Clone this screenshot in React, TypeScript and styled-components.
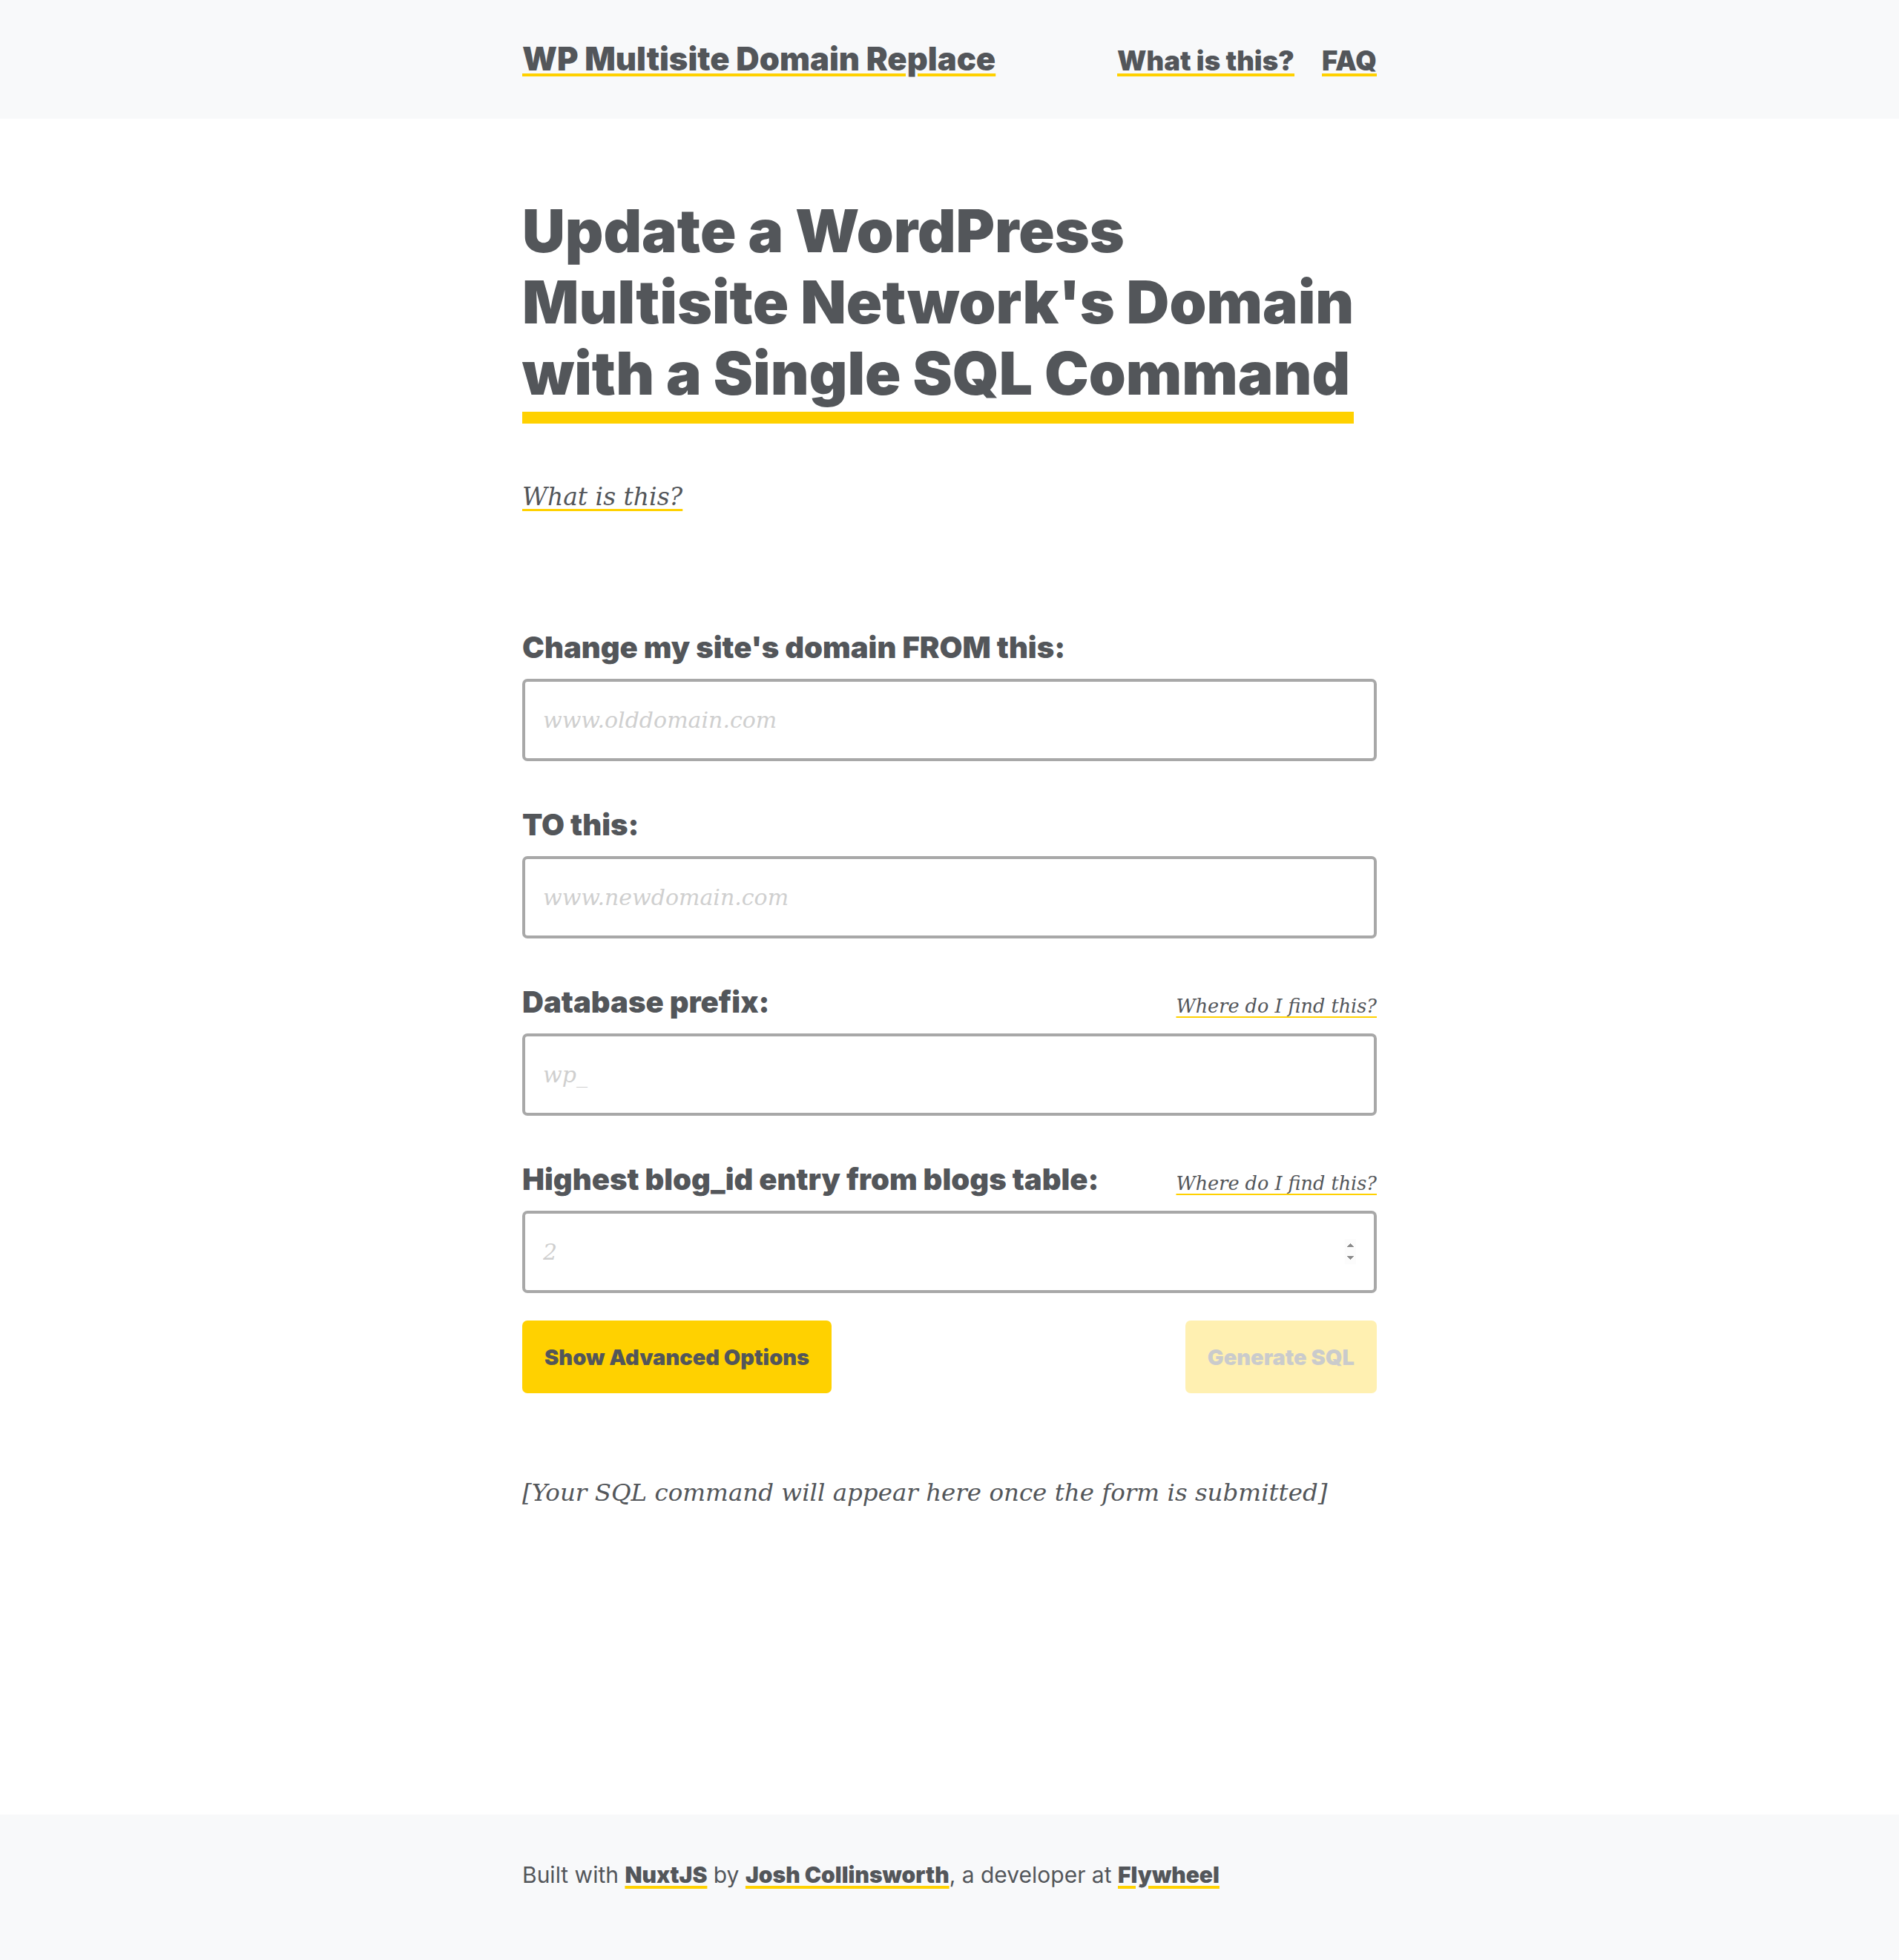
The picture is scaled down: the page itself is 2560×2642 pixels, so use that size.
import React from "react";
import styled, { createGlobalStyle } from "styled-components";

const ink = "#53565a";
const yellow = "#ffd100";
const shade = "#f8f9fa";
const sans = `Inter, Roboto, "Noto Sans", sans-serif`;
const serif = `"DejaVu Serif", "Liberation Serif", serif`;

const GlobalStyle = createGlobalStyle`
  html, body { margin: 0; padding: 0; }
  body {
    background: #ffffff;
    color: ${ink};
    font-family: ${sans};
  }
  * { box-sizing: border-box; }
`;

const Page = styled.div`
  min-height: 100vh;
  display: flex;
  flex-direction: column;
`;

const Container = styled.div`
  width: 1152px;
  margin: 0 auto;
`;

const Header = styled.header`
  background: ${shade};
  height: 160px;
  padding-top: 53px;
`;

const HeaderInner = styled(Container)`
  display: flex;
  justify-content: space-between;
  align-items: baseline;
`;

const underline = (thickness: number, offset: number) => `
  color: ${ink};
  text-decoration: underline;
  text-decoration-color: ${yellow};
  text-decoration-thickness: ${thickness}px;
  text-underline-offset: ${offset}px;
`;

const SiteTitle = styled.a`
  font-size: 43.5px;
  font-weight: 900;
  line-height: 1.2;
  ${underline(4, 4)}
`;

const Nav = styled.nav`
  display: flex;
  gap: 37px;
  align-items: baseline;
`;

const NavLink = styled.a`
  font-size: 36.5px;
  font-weight: 900;
  line-height: 1.2;
  ${underline(4, 4)}
`;

const Main = styled.main`
  flex: 1;
  padding-top: 103px;
`;

const Title = styled.h1`
  margin: 0;
  font-size: 80px;
  font-weight: 900;
  line-height: 96px;
`;

const TitleText = styled.span`
  display: inline-block;
  padding-bottom: 4px;
  border-bottom: 16px solid ${yellow};
`;

const Intro = styled.p`
  margin: 79px 0 0;
  font-family: ${serif};
  font-style: italic;
  font-size: 33px;
`;

const SerifLink = styled.a`
  ${underline(3, 5)}
`;

const Form = styled.form`
  margin-top: 160px;
  display: flex;
  flex-direction: column;
`;

const Field = styled.div`
  display: flex;
  flex-direction: column;
  gap: 18px;
  & + & {
    margin-top: 62px;
  }
`;

const LabelRow = styled.div`
  display: flex;
  justify-content: space-between;
  align-items: baseline;
`;

const Label = styled.label`
  font-size: 40px;
  font-weight: 900;
  line-height: 1.2;
`;

const Help = styled.a`
  font-family: ${serif};
  font-style: italic;
  font-size: 25.5px;
  ${underline(2, 5)}
`;

const Input = styled.input`
  display: block;
  width: 100%;
  height: 111px;
  padding: 0 24px;
  border: 4px solid #a8a8a8;
  border-radius: 7px;
  background: #fff;
  color: ${ink};
  font-family: ${serif};
  font-style: italic;
  font-size: 30px;
  outline: none;
  &::placeholder {
    color: #cfcfcf;
  }
  &::-webkit-inner-spin-button {
    opacity: 1;
  }
`;

const ButtonRow = styled.div`
  margin-top: 37px;
  display: flex;
  justify-content: space-between;
`;

const Button = styled.button<{ $disabled?: boolean }>`
  height: 98px;
  padding: 0 30px;
  border: none;
  border-radius: 7px;
  background: ${yellow};
  color: ${ink};
  font-family: ${sans};
  font-size: 29px;
  font-weight: 900;
  cursor: pointer;
  opacity: ${(p) => (p.$disabled ? 0.3 : 1)};
`;

const Output = styled.p`
  margin: 115px 0 0;
  font-family: ${serif};
  font-style: italic;
  font-size: 32.5px;
`;

const Footer = styled.footer`
  background: ${shade};
  height: 196px;
  padding-top: 63px;
`;

const FooterText = styled.p`
  margin: 0;
  font-size: 30px;
  font-weight: 400;
  line-height: 1.2;
`;

const FooterLink = styled.a`
  font-weight: 900;
  ${underline(4, 4)}
`;

export default function App() {
  return (
    <Page>
      <GlobalStyle />
      <Header>
        <HeaderInner>
          <SiteTitle href="#">WP Multisite Domain Replace</SiteTitle>
          <Nav>
            <NavLink href="#">What is this?</NavLink>
            <NavLink href="#">FAQ</NavLink>
          </Nav>
        </HeaderInner>
      </Header>
      <Main>
        <Container>
          <Title>
            <TitleText>
              Update a WordPress
              <br />
              Multisite Network's Domain
              <br />
              with a Single SQL Command
            </TitleText>
          </Title>
          <Intro>
            <SerifLink href="#">What is this?</SerifLink>
          </Intro>
          <Form onSubmit={(e) => e.preventDefault()}>
            <Field>
              <LabelRow>
                <Label htmlFor="from">Change my site's domain FROM this:</Label>
              </LabelRow>
              <Input id="from" type="text" placeholder="www.olddomain.com" />
            </Field>
            <Field>
              <LabelRow>
                <Label htmlFor="to">TO this:</Label>
              </LabelRow>
              <Input id="to" type="text" placeholder="www.newdomain.com" />
            </Field>
            <Field>
              <LabelRow>
                <Label htmlFor="prefix">Database prefix:</Label>
                <Help href="#">Where do I find this?</Help>
              </LabelRow>
              <Input id="prefix" type="text" placeholder="wp_" />
            </Field>
            <Field>
              <LabelRow>
                <Label htmlFor="blogid">Highest blog_id entry from blogs table:</Label>
                <Help href="#">Where do I find this?</Help>
              </LabelRow>
              <Input id="blogid" type="number" placeholder="2" />
            </Field>
            <ButtonRow>
              <Button type="button">Show Advanced Options</Button>
              <Button type="submit" $disabled disabled>
                Generate SQL
              </Button>
            </ButtonRow>
          </Form>
          <Output>[Your SQL command will appear here once the form is submitted]</Output>
        </Container>
      </Main>
      <Footer>
        <Container>
          <FooterText>
            Built with <FooterLink href="#">NuxtJS</FooterLink> by{" "}
            <FooterLink href="#">Josh Collinsworth</FooterLink>, a developer at{" "}
            <FooterLink href="#">Flywheel</FooterLink>
          </FooterText>
        </Container>
      </Footer>
    </Page>
  );
}
